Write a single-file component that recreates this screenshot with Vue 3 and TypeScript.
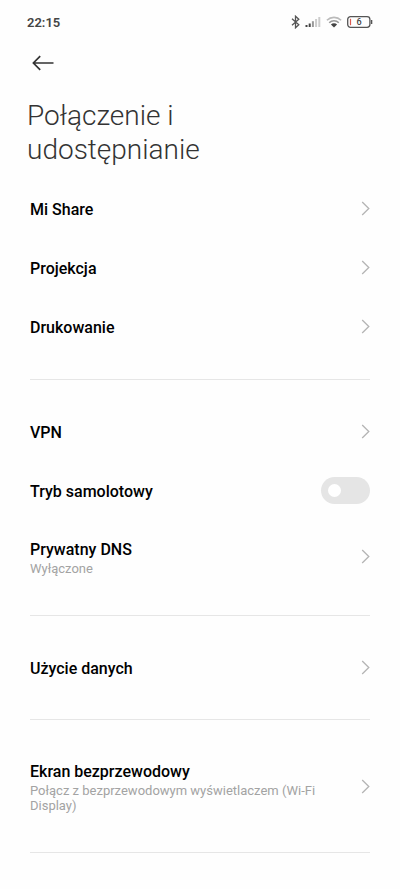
<script setup lang="ts">
import { ref } from 'vue'

interface Item {
  title: string
  note?: string
  toggle?: boolean
}

const airplaneMode = ref(false)

const groups: Item[][] = [
  [{ title: 'Mi Share' }, { title: 'Projekcja' }, { title: 'Drukowanie' }],
  [
    { title: 'VPN' },
    { title: 'Tryb samolotowy', toggle: true },
    { title: 'Prywatny DNS', note: 'Wyłączone' },
  ],
  [{ title: 'Użycie danych' }],
  [
    {
      title: 'Ekran bezprzewodowy',
      note: 'Połącz z bezprzewodowym wyświetlaczem (Wi-Fi Display)',
    },
  ],
]
</script>

<template>
  <div class="screen">
    <div class="status">
      <time class="clock">22:15</time>
      <div class="indicators">
        <svg width="9" height="14" viewBox="0 0 9 14" fill="none" stroke="#555" stroke-width="1.3" aria-hidden="true">
          <path d="M1 3.8 7.8 9.8 4.5 12.8V1.2L7.8 4.2 1 10.2" />
        </svg>
        <svg width="16" height="12" viewBox="0 0 16 12" aria-hidden="true">
          <path d="M.5 9h2v2h-2zM3.7 7.5h2V11h-2z" fill="#444" />
          <path d="M6.9 5.2h2V11h-2z" fill="#999" />
          <path d="M10.1 3h2v8h-2zM13.3 1h2v10h-2z" fill="#ccc" />
        </svg>
        <svg width="16" height="12" viewBox="0 0 16 12" fill="none" stroke-width="1.6" aria-hidden="true">
          <path d="M.9 4.3a10.2 10.2 0 0 1 14.2 0" stroke="#bbb" />
          <path d="M3.2 6.7a6.9 6.9 0 0 1 9.6 0" stroke="#999" />
          <path d="M8 11.6 4.9 8.6a4.4 4.4 0 0 1 6.2 0z" fill="#444" />
        </svg>
        <div class="battery">
          <svg width="26" height="12" viewBox="0 0 26 12" fill="none" aria-hidden="true">
            <rect x=".7" y=".7" width="22.2" height="10.6" rx="2.8" stroke="#555" stroke-width="1.3" />
            <path d="M24.6 4v4" stroke="#555" stroke-width="1.4" />
            <path d="M3.5 2.8v6.4" stroke="#dc5a50" stroke-width="1.2" />
          </svg>
          <span class="level">6</span>
        </div>
      </div>
    </div>

    <header>
      <button class="back" type="button" aria-label="Wstecz">
        <svg width="22" height="16" viewBox="0 0 22 16" fill="none" stroke="#333" stroke-width="1.7" aria-hidden="true">
          <path d="M21.5 8H1.5M8.2 1.2 1.4 8l6.8 6.8" />
        </svg>
      </button>
      <h1>Połączenie i udostępnianie</h1>
    </header>

    <main>
      <section v-for="(group, index) in groups" :key="index" class="group">
        <template v-for="item in group" :key="item.title">
          <label v-if="item.toggle" class="row">
            <span class="text">
              <span class="title">{{ item.title }}</span>
            </span>
            <input v-model="airplaneMode" class="switch" type="checkbox" role="switch" />
          </label>
          <button v-else class="row" type="button">
            <span class="text">
              <span class="title">{{ item.title }}</span>
              <span v-if="item.note" class="note">{{ item.note }}</span>
            </span>
            <svg class="chevron" width="9" height="16" viewBox="0 0 9 16" fill="none" aria-hidden="true">
              <path d="M1.2 2 7.8 8.5 1.2 15" stroke="#b4b4b4" stroke-width="1.3" />
            </svg>
          </button>
        </template>
      </section>
    </main>
  </div>
</template>

<style>
body {
  background: #fefefe;
}
</style>

<style scoped>
.screen {
  font-family: Roboto, "Liberation Sans", sans-serif;
  color: #000;
}

.status {
  display: flex;
  align-items: center;
  justify-content: space-between;
  height: 44px;
  padding: 0 27px;
}

.clock {
  font-size: 13px;
  font-weight: 600;
  color: #444;
}

.indicators {
  display: flex;
  align-items: center;
  gap: 5px;
}

.battery {
  position: relative;
  display: flex;
}

.level {
  position: absolute;
  inset: 0 2px 0 0;
  font-size: 9px;
  line-height: 13px;
  font-weight: 500;
  text-align: center;
  color: #444;
}

header {
  padding: 0 27px;
}

.back {
  display: flex;
  align-items: center;
  height: 38px;
  padding: 0 5px;
  border: 0;
  background: none;
}

h1 {
  max-width: 240px;
  margin: 17px 0 12px;
  font-size: 28px;
  line-height: 34px;
  font-weight: 300;
  color: #333;
}

.group {
  margin: 0 30px;
  padding: 22px 0;
  border-bottom: 1px solid #e6e6e6;
}

.group:first-child {
  padding: 0 0 23px;
}

.row {
  display: flex;
  align-items: center;
  justify-content: space-between;
  box-sizing: border-box;
  width: 100%;
  min-height: 59px;
  padding: 16px 0 17px;
  border: 0;
  background: none;
  color: inherit;
  font: inherit;
  text-align: left;
}

label.row {
  padding: 16px 0;
}

.text {
  display: flex;
  flex-direction: column;
  max-width: 290px;
  padding-top: 3px;
}

.title {
  font-size: 16px;
  line-height: 22px;
  font-weight: 500;
}

.note {
  font-size: 13px;
  line-height: 15px;
  color: #a3a3a3;
}

.chevron {
  flex: none;
}

.switch {
  appearance: none;
  display: flex;
  align-items: center;
  box-sizing: border-box;
  width: 49px;
  height: 27px;
  margin: 0;
  padding: 0 7px;
  border-radius: 14px;
  background: #e5e5e5;
}

.switch::before {
  content: "";
  width: 13px;
  height: 13px;
  border-radius: 50%;
  background: #fff;
}

.switch:checked {
  justify-content: flex-end;
  background: #0d84ff;
}
</style>
